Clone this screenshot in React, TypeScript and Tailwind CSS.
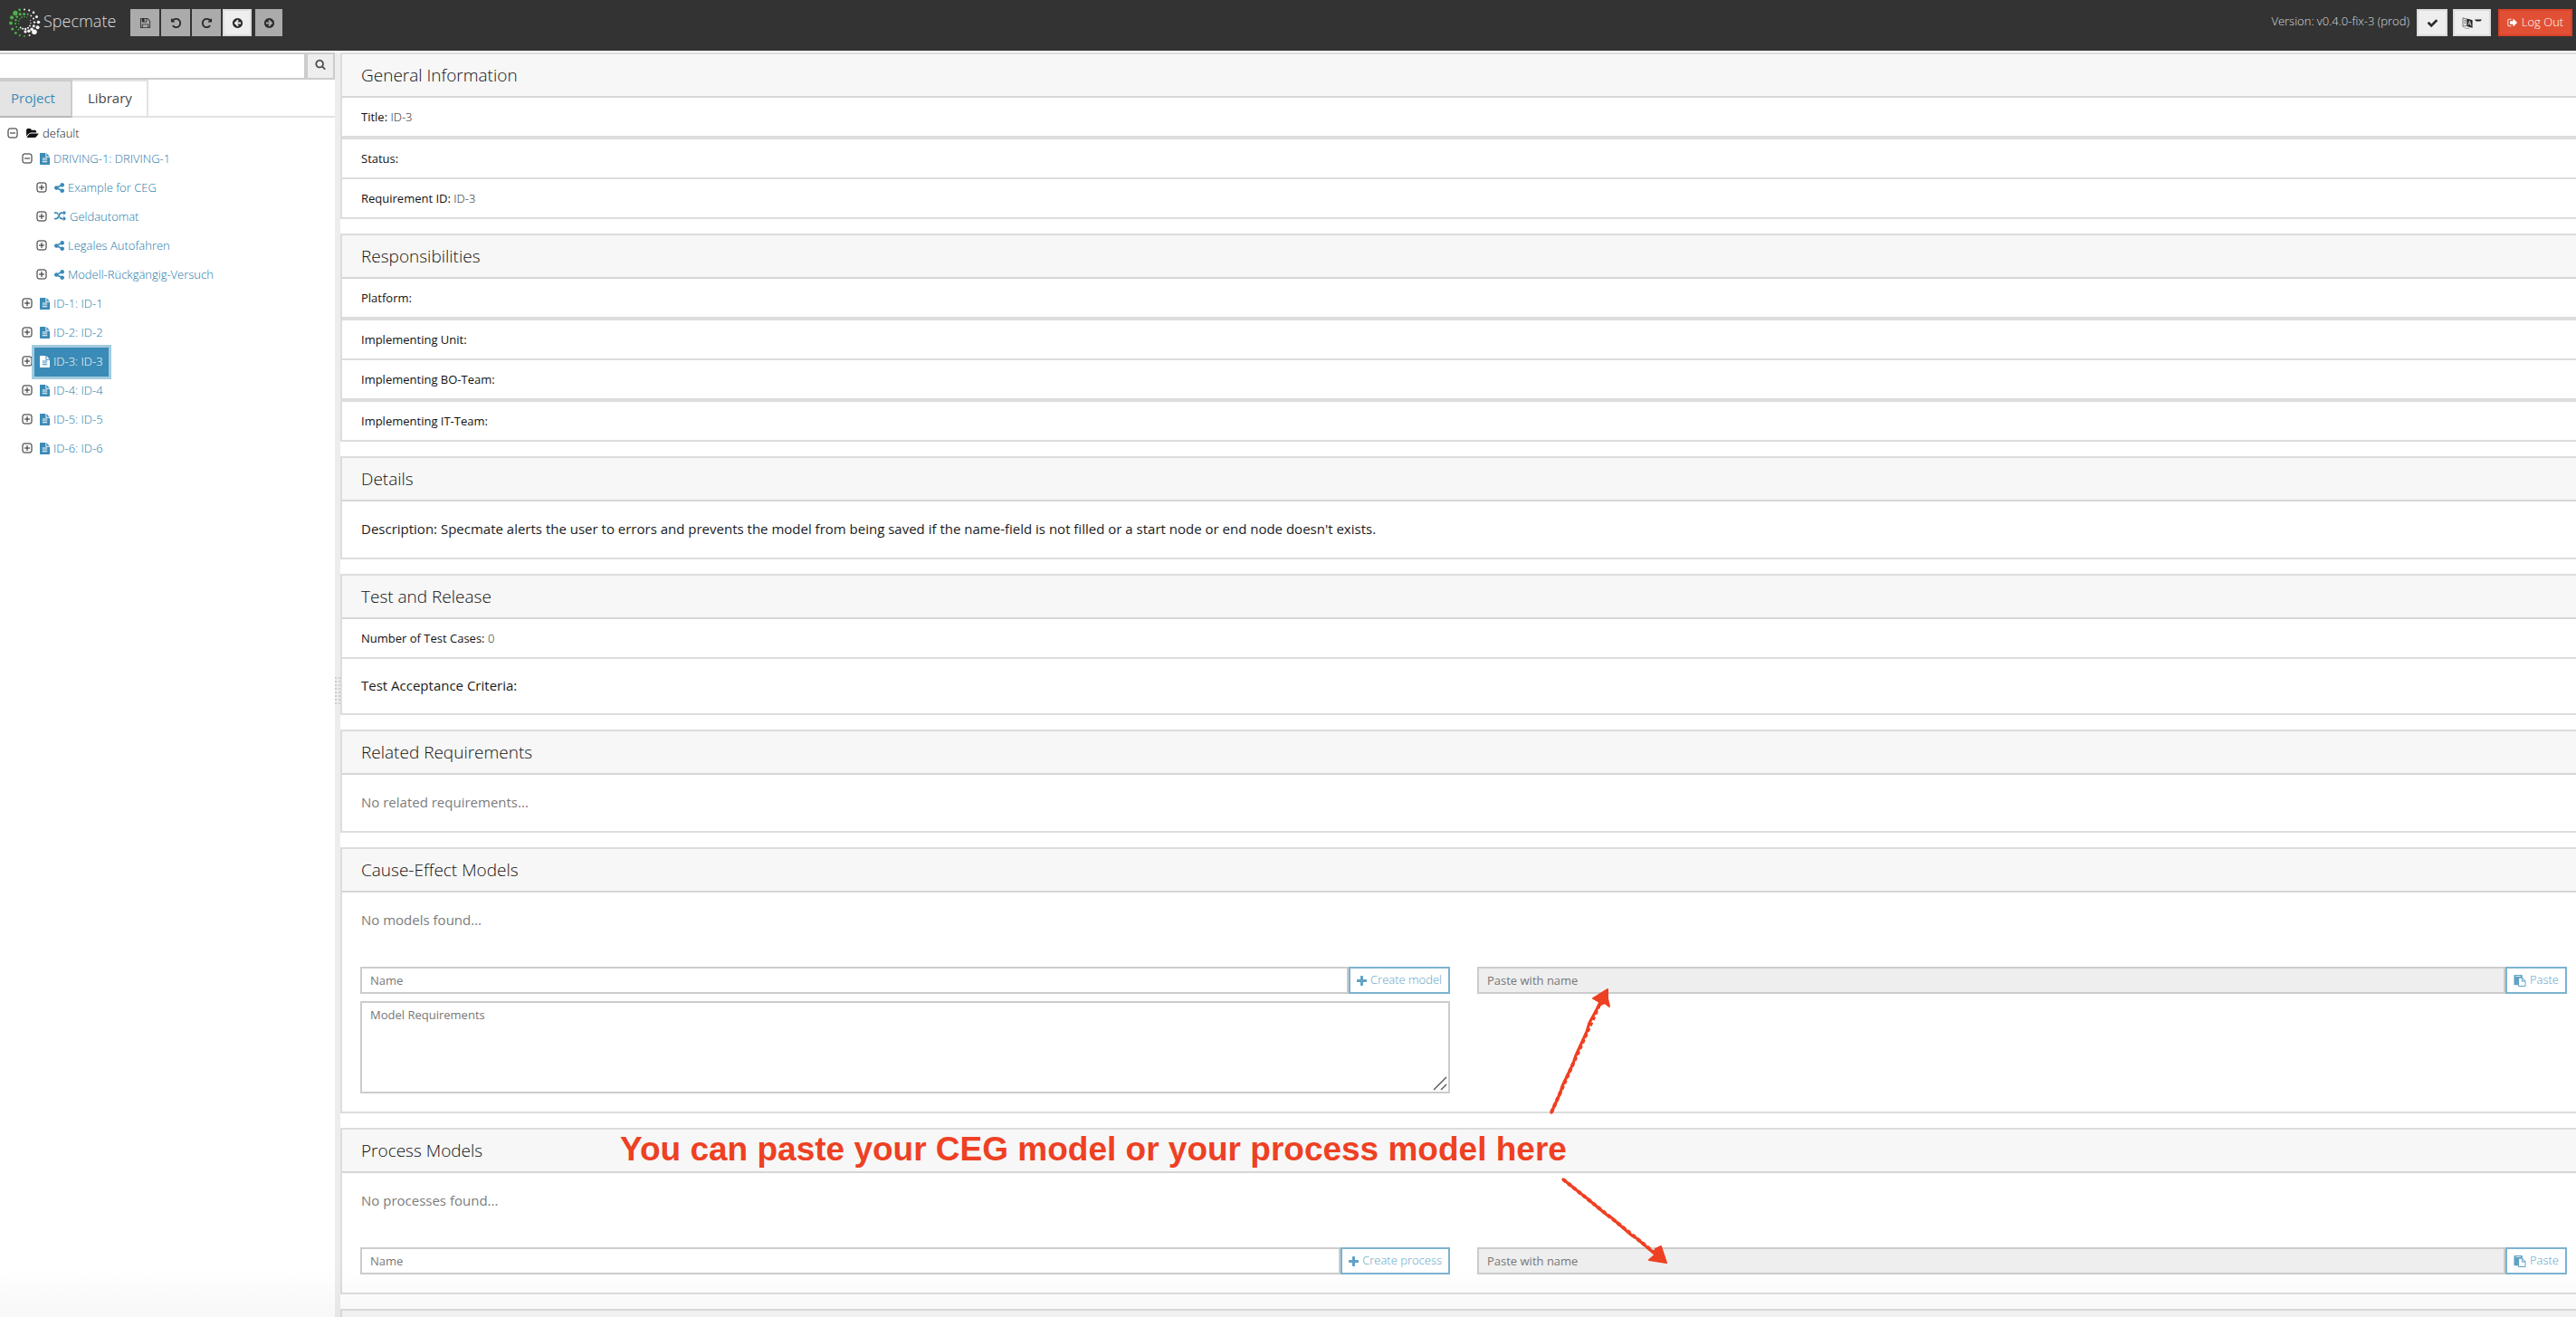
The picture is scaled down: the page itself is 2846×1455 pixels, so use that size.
import type { ReactNode } from "react";

const PATHS = {
  save: "M512 1536h768v-384h-768v384zm896 0h128v-896q0-14-10-38.5t-20-34.5l-281-281q-10-10-34-20t-39-10v416q0 40-28 68t-68 28h-576q-40 0-68-28t-28-68v-416h-128v1280h128v-416q0-40 28-68t68-28h832q40 0 68 28t28 68v416zm-384-928v-320q0-13-9.5-22.5t-22.5-9.5h-192q-13 0-22.5 9.5t-9.5 22.5v320q0 13 9.5 22.5t22.5 9.5h192q13 0 22.5-9.5t9.5-22.5zm640 32v928q0 40-28 68t-68 28h-1344q-40 0-68-28t-28-68v-1344q0-40 28-68t68-28h928q40 0 88 20t76 48l280 280q28 28 48 76t20 88z",
  undo: "M1664 896q0 156-61 298t-164 245-245 164-298 61q-172 0-327-72.5t-264-204.5q-7-10-6.5-22.5t8.5-20.5l137-138q10-9 25-9 16 2 23 12 73 95 179 147t225 52q104 0 198.5-40.5t163.5-109.5 109.5-163.5 40.5-198.5-40.5-198.5-109.5-163.5-163.5-109.5-198.5-40.5q-98 0-188 35.5t-160 101.5l137 138q31 30 14 69-17 40-59 40h-448q-26 0-45-19t-19-45v-448q0-42 40-59 39-17 69 14l130 129q107-101 244.5-156.5t284.5-55.5q156 0 298 61t245 164 164 245 61 298z",
  redo: "M1664 256v448q0 26-19 45t-45 19h-448q-42 0-59-40-17-39 14-69l138-138q-148-137-349-137-104 0-198.5 40.5t-163.5 109.5-109.5 163.5-40.5 198.5 40.5 198.5 109.5 163.5 163.5 109.5 198.5 40.5q119 0 225-52t179-147q7-10 23-12 15 0 25 9l137 138q9 8 9.5 20.5t-7.5 22.5q-109 132-264 204.5t-327 72.5q-156 0-298-61t-245-164-164-245-61-298 61-298 164-245 245-164 298-61q147 0 284.5 55.5t244.5 156.5l130-129q29-31 70-14 39 17 39 59z",
  back: "M1408 960v-128q0-26-19-45t-45-19h-502l189-189q19-19 19-45t-19-45l-91-91q-18-18-45-18t-45 18l-362 362-91 91q-18 18-18 45t18 45l91 91 362 362q18 18 45 18t45-18l91-91q18-18 18-45t-18-45l-189-189h502q26 0 45-19t19-45zm256-64q0 209-103 385.5t-279.5 279.5-385.5 103-385.5-103-279.5-279.5-103-385.5 103-385.5 279.5-279.5 385.5-103 385.5 103 279.5 279.5 103 385.5z",
  check: "M1671 566q0 40-28 68l-724 724-136 136q-28 28-68 28t-68-28l-136-136-362-362q-28-28-28-68t28-68l136-136q28-28 68-28t68 28l294 295 656-657q28-28 68-28t68 28l136 136q28 28 28 68z",
  signOut: "M704 1440q0 4 1 20t.5 26.5-3 23.5-10 19.5-20.5 6.5h-320q-119 0-203.5-84.5t-84.5-203.5v-704q0-119 84.5-203.5t203.5-84.5h320q13 0 22.5 9.5t9.5 22.5q0 4 1 20t.5 26.5-3 23.5-10 19.5-20.5 6.5h-320q-66 0-113 47t-47 113v704q0 66 47 113t113 47h312l11.5 1 11.5 3 8 5.5 7 9 2 13.5zm928-544q0 26-19 45l-544 544q-19 19-45 19t-45-19-19-45v-288h-448q-26 0-45-19t-19-45v-384q0-26 19-45t45-19h448v-288q0-26 19-45t45-19 45 19l544 544q19 19 19 45z",
  search: "M1216 832q0-185-131.5-316.5t-316.5-131.5-316.5 131.5-131.5 316.5 131.5 316.5 316.5 131.5 316.5-131.5 131.5-316.5zm512 832q0 52-38 90t-90 38q-54 0-90-38l-343-342q-179 124-399 124-143 0-273.5-55.5t-225-150-150-225-55.5-273.5 55.5-273.5 150-225 225-150 273.5-55.5 273.5 55.5 225 150 150 225 55.5 273.5q0 220-124 399l343 343q37 37 37 90z",
  folder: "M1879 952q0 31-31 66l-336 396q-43 51-120.5 86.5t-143.5 35.5h-1088q-34 0-60.5-13t-26.5-43q0-31 31-66l336-396q43-51 120.5-86.5t143.5-35.5h1088q34 0 60.5 13t26.5 43zm-343-344v160h-832q-94 0-197 47.5t-164 119.5l-337 396-5 6q0-4-.5-12.5t-.5-12.5v-960q0-92 66-158t158-66h320q92 0 158 66t66 158v32h544q92 0 158 66t66 158z",
  file: "M1596 476q14 14 28 36h-472v-472q22 14 36 28zm-476 164h544v1056q0 40-28 68t-68 28h-1344q-40 0-68-28t-28-68v-1600q0-40 28-68t68-28h800v544q0 40 28 68t68 28zm160 736v-64q0-14-9-23t-23-9h-704q-14 0-23 9t-9 23v64q0 14 9 23t23 9h704q14 0 23-9t9-23zm0-256v-64q0-14-9-23t-23-9h-704q-14 0-23 9t-9 23v64q0 14 9 23t23 9h704q14 0 23-9t9-23zm0-256v-64q0-14-9-23t-23-9h-704q-14 0-23 9t-9 23v64q0 14 9 23t23 9h704q14 0 23-9t9-23z",
  share: "M1344 1024q133 0 226.5 93.5t93.5 226.5-93.5 226.5-226.5 93.5-226.5-93.5-93.5-226.5q0-12 2-34l-360-180q-92 86-218 86-133 0-226.5-93.5t-93.5-226.5 93.5-226.5 226.5-93.5q126 0 218 86l360-180q-2-22-2-34 0-133 93.5-226.5t226.5-93.5 226.5 93.5 93.5 226.5-93.5 226.5-226.5 93.5q-126 0-218-86l-360 180q2 22 2 34t-2 34l360 180q92-86 218-86z",
  random: "M666 481q-60 92-137 273-22-45-37-72.5t-40.5-63.5-51-56.5-63-35-81.5-14.5h-224q-14 0-23-9t-9-23v-192q0-14 9-23t23-9h224q250 0 410 225zm1126 799q0 14-9 23l-320 320q-9 9-23 9-13 0-22.5-9.5t-9.5-22.5v-192q-32 0-85 .5t-81 1-73-1-71-5-64-10.5-63-18.5-58-28.5-59-40-55-53.5-56-69.5q59-93 136-273 22 45 37 72.5t40.5 63.5 51 56.5 63 35 81.5 14.5h256v-192q0-14 9-23t23-9q12 0 24 10l319 319q9 9 9 23zm0-896q0 14-9 23l-320 320q-9 9-23 9-13 0-22.5-9.5t-9.5-22.5v-192h-256q-48 0-87 15t-69 45-51 61.5-45 77.5q-32 62-78 171-29 66-49.5 111t-54 105-64 100-74 83-90 68.5-106.5 42-128 16.5h-224q-14 0-23-9t-9-23v-192q0-14 9-23t23-9h224q48 0 87-15t69-45 51-61.5 45-77.5q32-62 78-171 29-66 49.5-111t54-105 64-100 74-83 90-68.5 106.5-42 128-16.5h256v-192q0-14 9-23t23-9q12 0 24 10l319 319q9 9 9 23z",
  plus: "M1600 736v192q0 40-28 68t-68 28h-416v416q0 40-28 68t-68 28h-192q-40 0-68-28t-28-68v-416h-416q-40 0-68-28t-28-68v-192q0-40 28-68t68-28h416v-416q0-40 28-68t68-28h192q40 0 68 28t28 68v416h416q40 0 68 28t28 68z",
  paste: "M768 1664h896v-640h-416q-40 0-68-28t-28-68v-416h-384v1152zm256-1440v-64q0-13-9.5-22.5t-22.5-9.5h-704q-13 0-22.5 9.5t-9.5 22.5v64q0 13 9.5 22.5t22.5 9.5h704q13 0 22.5-9.5t9.5-22.5zm256 672h299l-299-299v299zm512 128v672q0 40-28 68t-68 28h-960q-40 0-68-28t-28-68v-160h-544q-40 0-68-28t-28-68v-1344q0-40 28-68t68-28h1088q40 0 68 28t28 68v328q21 13 36 28l408 408q28 28 48 76t20 88z",
};
type IconName = keyof typeof PATHS;

function Icon({ name, box = "0 0 1792 1792", className = "h-[13px] w-[13px]", flip = false }: { name: IconName; box?: string; className?: string; flip?: boolean }) {
  return (
    <svg viewBox={box} className={`shrink-0 ${className}`} fill="currentColor" aria-hidden="true">
      <path d={PATHS[name]} transform={flip ? "translate(1792 0) scale(-1 1)" : undefined} />
    </svg>
  );
}

/* Ring dots: angle in degrees (clockwise from east), distance from centre, radius, colour */
const G = "#4caf4a";
const W = "#f4f4f4";
const DOTS: [number, number, number, string][] = [
  [90, 15, 0.9, G], [110, 15, 1.1, G], [130, 15, 1.4, G], [152, 15, 1.6, G], [178, 15, 2, G], [202, 15, 2.1, G], [226, 14.5, 2.7, G], [249, 15, 1.4, G],
  [270, 14.5, 1, W], [291, 14.5, 1.1, W], [312, 15, 1.3, W], [334, 15, 1.5, W], [358, 15.5, 1.8, W], [20, 15.5, 2, W], [43, 15, 2.8, W], [68, 15, 1, W],
  [130, 10, 0.9, G], [152, 10, 1, G], [174, 10, 1.1, G], [196, 10, 1.2, G], [218, 10.5, 1.4, G], [243, 10.5, 1.6, G], [268, 9.5, 1.6, G], [292, 10, 1, "#8a9a8a"],
  [314, 10.5, 0.9, W], [336, 11, 1, W], [358, 11, 1.2, W], [20, 11, 1.5, W], [42, 11, 1.8, W], [62, 10.5, 1.8, W], [84, 10, 1.6, W],
  [170, 6.5, 0.6, G], [195, 6.5, 0.7, G], [220, 6.5, 0.8, G], [245, 6.5, 0.9, G], [270, 6.5, 0.8, G], [295, 6.5, 0.7, G],
  [340, 7, 0.6, W], [5, 7, 0.7, W], [30, 7, 0.9, W], [55, 7, 1.1, W], [80, 7, 1.2, W], [105, 7, 1.1, W], [128, 7, 1, W],
];

function Logo() {
  return (
    <svg viewBox="-18 -18 36 36" className="h-9 w-9" aria-hidden="true">
      {DOTS.map(([a, d, r, c], i) => {
        const t = (a * Math.PI) / 180;
        return <circle key={i} cx={Math.cos(t) * d} cy={Math.sin(t) * d} r={r} fill={c} />;
      })}
    </svg>
  );
}

function LanguageIcon() {
  return (
    <svg viewBox="0 0 12 13" className="h-[13px] w-3" fill="none" aria-hidden="true">
      <path d="M5.5 2.2 1 .8v9.6l4.5-1.3" stroke="#555" strokeWidth=".8" />
      <path d="M2 3.6h3M3.5 2.8v.8M2.2 7.6c1.3-.8 2-2 2.2-3.9M2.4 4.8c.5 1.2 1.2 2 2.2 2.6" stroke="#555" strokeWidth=".6" />
      <path d="M5.4 1.4 11.6 3.2v8.6L5.4 9.9z" fill="#222" />
      <path d="M7 8.6 8.5 4l1.6 5.5M7.5 7.2l2 .5" stroke="#eee" strokeWidth=".8" />
      <path d="M2.5 11.4c1.6 1.2 4.4 1.4 6 .6" stroke="#777" strokeWidth=".7" />
    </svg>
  );
}

function ToolButton({ label, active = false, className = "w-8", children }: { label: string; active?: boolean; className?: string; children: ReactNode }) {
  return (
    <button
      aria-label={label}
      className={`flex h-[30px] items-center justify-center text-[#292b2c] ${className} ${active ? "border-2 border-[#dcdcdc] bg-[#eeeeee]" : "bg-[#ababab]"}`}
    >
      {children}
    </button>
  );
}

function Header() {
  return (
    <header className="flex h-14 shrink-0 items-start justify-between bg-[#333333] pt-[10px] pr-1 pl-[9px]">
      <div className="flex">
        <a href="#" className="-mt-[3px] flex h-9 w-[135px] items-center gap-[3px] text-[18px] leading-6 font-light text-[#dddddd]">
          <Logo />
          <span className="-mt-1">Specmate</span>
        </a>
        <div className="flex gap-[2px]">
          <ToolButton label="Save"><Icon name="save" /></ToolButton>
          <ToolButton label="Undo"><Icon name="undo" /></ToolButton>
          <ToolButton label="Redo"><Icon name="redo" /></ToolButton>
          <ToolButton label="Back" active><Icon name="back" /></ToolButton>
          <ToolButton label="Forward" className="ml-[2px] w-[30px]"><Icon name="back" flip /></ToolButton>
        </div>
      </div>
      <div className="flex">
        <span className="mt-[3px] mr-2 text-[13px] leading-5 font-light text-[#dddddd]">Version: v0.4.0-fix-3 (prod)</span>
        <ToolButton label="Confirm" active className="w-[34px]"><Icon name="check" /></ToolButton>
        <ToolButton label="Language" active className="ml-[6px] w-[42px] gap-[2px]">
          <LanguageIcon />
          <svg viewBox="0 0 8 4" className="-mt-1 h-1 w-2" aria-hidden="true"><path d="M0 .6h8L6.4 2.4H1.6z" fill="#222" /></svg>
        </ToolButton>
        <button className="ml-2 flex h-[30px] w-[82px] items-center justify-center gap-1 border-2 border-[#d9412a] bg-[#e15035] text-[13px] font-light text-white">
          <Icon name="signOut" className="h-3 w-3" />
          Log Out
        </button>
      </div>
    </header>
  );
}

type Node = { label: string; icon: IconName; level: 0 | 1 | 2; open?: boolean; selected?: boolean };
const NODES: Node[] = [
  { label: "default", icon: "folder", level: 0, open: true },
  { label: "DRIVING-1: DRIVING-1", icon: "file", level: 1, open: true },
  { label: "Example for CEG", icon: "share", level: 2 },
  { label: "Geldautomat", icon: "random", level: 2 },
  { label: "Legales Autofahren", icon: "share", level: 2 },
  { label: "Modell-Rückgängig-Versuch", icon: "share", level: 2 },
  { label: "ID-1: ID-1", icon: "file", level: 1 },
  { label: "ID-2: ID-2", icon: "file", level: 1 },
  { label: "ID-3: ID-3", icon: "file", level: 1, selected: true },
  { label: "ID-4: ID-4", icon: "file", level: 1 },
  { label: "ID-5: ID-5", icon: "file", level: 1 },
  { label: "ID-6: ID-6", icon: "file", level: 1 },
];
const INDENT = ["pl-2", "pl-6", "pl-10"];
const ICON_CLASS: Partial<Record<IconName, [string, string]>> = {
  folder: ["0 128 1920 1536", "h-[11px] w-[14px]"],
  file: ["128 0 1536 1792", "h-[13px] w-[11px]"],
  share: ["128 128 1536 1536", "h-[11px] w-[11px]"],
  random: ["0 128 1792 1600", "h-3 w-[13px]"],
};

function TreeRow({ node }: { node: Node }) {
  const [box, size] = ICON_CLASS[node.icon]!;
  const color =
    node.level === 0 ? "pl-[5px] text-[#111111]" : node.selected ? "relative bg-[#3a8bb7] pl-[6px] text-white ring-3 ring-[#a3cade]" : "pl-[6px] text-[#1d78a8]";
  return (
    <li className={`flex items-center ${INDENT[node.level]} ${node.level === 0 ? "h-[26px]" : "h-8"}`}>
      <button aria-label={node.open ? `Collapse ${node.label}` : `Expand ${node.label}`} className={node.level === 0 ? "mr-1" : "mr-[2px] pb-[2px]"}>
        <svg viewBox="0 0 12 12" className="h-3 w-3" fill="none" stroke="#222" aria-hidden="true">
          <rect x="1" y="1" width="10" height="10" rx="2" />
          <path d={node.open ? "M3 6h6" : "M3 6h6M6 3v6"} />
        </svg>
      </button>
      <a href="#" className={`flex h-full items-center gap-1 pr-[6px] text-[13px] leading-5 font-light whitespace-nowrap ${node.level === 0 ? "" : "pb-[2px]"} ${color}`}>
        <Icon name={node.icon} box={box} className={`${size} ${node.selected || node.level === 0 ? "" : "text-[#3a8bb7]"}`} />
        {node.label}
      </a>
    </li>
  );
}

function Sidebar() {
  return (
    <aside className="w-[370px] shrink-0">
      <div className="flex h-[30px]">
        <input aria-label="Search" className="min-w-0 flex-1 border-y-2 border-[#cccccc] bg-white px-2 text-[13px] outline-none" />
        <button aria-label="Search" className="flex w-[34px] items-center justify-center border-2 border-l-4 border-[#cccccc] bg-[#eeeeee] text-[#464a4c]">
          <Icon name="search" className="-mt-1 h-3 w-3" />
        </button>
      </div>
      <div role="tablist" className="flex h-[42px] border-b-2 border-[#e2e2e2] text-[15px]">
        <button role="tab" aria-selected="true" className="-mb-[2px] border-y-2 border-r-2 border-t-[#cccccc] border-r-[#cccccc] border-b-[#b8b8b8] bg-[#e4e4e4] pr-[17px] pb-[2px] pl-3 text-[#3a8bb7]">Project</button>
        <button role="tab" aria-selected="false" className="border-t-2 border-r-2 border-[#e2e2e2] bg-white pr-4 pb-[2px] pl-[17px] text-[#464a4c]">Library</button>
      </div>
      <ul className="pt-1">
        {NODES.map((n) => <TreeRow key={n.label} node={n} />)}
      </ul>
    </aside>
  );
}

function Sash() {
  return (
    <div role="separator" aria-orientation="vertical" className="flex w-[6px] shrink-0 flex-col justify-center gap-[2px] bg-[#ededed] pt-3">
      {Array.from({ length: 8 }, (_, i) => (
        <div key={i} className="flex h-[2px] justify-between">
          <span className="w-[2px] bg-[#cccccc]" />
          <span className="w-[2px] bg-[#cccccc]" />
        </div>
      ))}
    </div>
  );
}

function Card({ title, children }: { title?: string; children?: ReactNode }) {
  return (
    <section className="border-2 border-[#dddddd] bg-white">
      {title ? (
        <h2 className="border-b-2 border-[#d6d6d6] bg-[#f7f7f7] px-[21px] py-[10px] text-[19px] leading-[26px] font-light text-[#111111]">{title}</h2>
      ) : (
        <div className="h-12 bg-[#f7f7f7]" />
      )}
      {children}
    </section>
  );
}

function Row({ label, value, rule = "" }: { label: string; value?: string; rule?: string }) {
  return (
    <div className={`border-[#dddddd] px-[21px] py-[10px] text-[13px] leading-[22px] text-[#111111] ${rule}`}>
      {label}: {value && <span className="font-light text-[#222222]">{value}</span>}
    </div>
  );
}

function ActionButton({ icon, children }: { icon: IconName; children: ReactNode }) {
  return (
    <button className="flex h-[30px] shrink-0 items-center gap-1 border-2 border-[#7db2cf] bg-white px-[7px] text-[13px] font-light whitespace-nowrap text-[#61a2c5]">
      {icon === "plus" ? <Icon name="plus" box="192 128 1408 1408" className="h-[11px] w-[11px]" /> : <Icon name="paste" className="h-[13px] w-[14px]" />}
      {children}
    </button>
  );
}

const FIELD = "border-2 border-[#cccccc] px-[9px] text-[13px] leading-5 placeholder:text-[#777777] outline-none";

function ModelForm({ empty, action, withRequirements = false }: { empty: string; action: string; withRequirements?: boolean }) {
  return (
    <div className="px-5 pb-5">
      <p className="px-px pt-[19px] pb-[21px] text-[15px] leading-[22px] text-[#7c7c7c]">{empty}</p>
      <div className="grid grid-cols-2 items-start gap-[30px] pt-5">
        <div className="flex flex-col gap-2">
          <div className="flex">
            <input aria-label="Name" placeholder="Name" className={`h-[30px] min-w-0 flex-1 bg-white ${FIELD}`} />
            <ActionButton icon="plus">{action}</ActionButton>
          </div>
          {withRequirements && (
            <div className="relative flex">
              <textarea aria-label="Model Requirements" placeholder="Model Requirements" className={`h-[102px] w-full resize-none bg-white py-[3px] ${FIELD}`} />
              <svg viewBox="0 0 16 16" className="absolute right-[3px] bottom-[3px] h-4 w-4" stroke="#555" strokeWidth="1.4" aria-hidden="true">
                <path d="M1 15 15 1M9 15l6-6" />
              </svg>
            </div>
          )}
        </div>
        <div className="flex">
          <input aria-label="Paste with name" placeholder="Paste with name" disabled className={`h-[30px] min-w-0 flex-1 bg-[#eeeeee] ${FIELD}`} />
          <ActionButton icon="paste">Paste</ActionButton>
        </div>
      </div>
    </div>
  );
}

function Annotation() {
  return (
    <>
      <p className="absolute top-[1250px] left-[685px] font-['Liberation_Sans',sans-serif] text-[37px] leading-10 font-bold whitespace-nowrap text-[#ee4023]">
        You can paste your CEG model or your process model here
      </p>
      <svg viewBox="1700 1080 160 330" className="pointer-events-none absolute top-[1080px] left-[1700px] h-[330px] w-[160px]" stroke="#ee4023" fill="#ee4023" strokeLinecap="round" strokeLinejoin="round" aria-hidden="true">
        <path d="M1714 1229 1724 1207 1726 1200 1738 1175 1741 1166 1753 1140 1756 1130 1768 1108M1727 1303 1747 1319 1751 1322 1775 1342 1780 1345 1803 1365 1808 1368 1828 1385" fill="none" strokeWidth="3.2" />
        <path d="M1714 1229 1768 1108M1727 1303 1828 1384" fill="none" strokeWidth="4" strokeDasharray="4 3" strokeLinecap="butt" />
        <path d="M1776 1093 1760 1103 1767 1107 1766 1111 1773 1108 1778 1112 1776 1103zM1835 1377 1829 1380 1829 1386 1822 1392 1841 1395z" strokeWidth="2" />
      </svg>
    </>
  );
}

export default function App() {
  return (
    <div className="relative flex h-screen flex-col overflow-hidden bg-white font-['Open_Sans',sans-serif]">
      <Header />
      <div className="flex min-h-0 flex-1 pt-[2px]">
        <Sidebar />
        <Sash />
        <main className="min-w-0 flex-1 overflow-hidden">
          <div className="-mr-3 flex flex-col gap-4">
            <Card title="General Information">
              <Row label="Title" value="ID-3" />
              <Row label="Status" rule="border-t-4" />
              <Row label="Requirement ID" value="ID-3" rule="border-t-2" />
            </Card>
            <Card title="Responsibilities">
              <Row label="Platform" />
              <Row label="Implementing Unit" rule="border-t-4" />
              <Row label="Implementing BO-Team" rule="border-t-2" />
              <Row label="Implementing IT-Team" rule="border-t-4" />
            </Card>
            <Card title="Details">
              <p className="px-[21px] pt-[19px] pb-[21px] text-[15px] leading-[22px] text-[#1a1a1a]">
                Description: Specmate alerts the user to errors and prevents the model from being saved if the name-field is not filled or a start node or end node doesn't exists.
              </p>
            </Card>
            <Card title="Test and Release">
              <Row label="Number of Test Cases" value="0" />
              <p className="border-t-2 border-[#dddddd] px-[21px] pt-[18px] pb-5 text-[15px] leading-[22px] text-[#1a1a1a]">Test Acceptance Criteria:</p>
            </Card>
            <Card title="Related Requirements">
              <p className="px-[21px] pt-[19px] pb-[21px] text-[15px] leading-[22px] text-[#7c7c7c]">No related requirements...</p>
            </Card>
            <Card title="Cause-Effect Models">
              <ModelForm empty="No models found..." action="Create model" withRequirements />
            </Card>
            <Card title="Process Models">
              <ModelForm empty="No processes found..." action="Create process" />
            </Card>
            <Card />
          </div>
        </main>
      </div>
      <Annotation />
      <div className="pointer-events-none absolute inset-x-0 bottom-0 h-14 bg-linear-to-b from-transparent to-black/3" />
    </div>
  );
}
